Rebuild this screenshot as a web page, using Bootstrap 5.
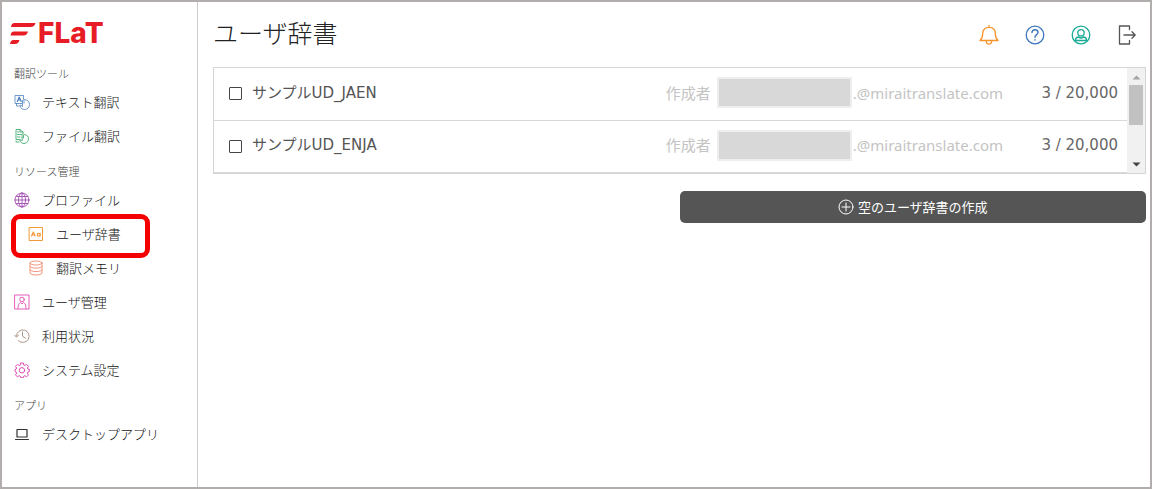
<!DOCTYPE html>
<html lang="ja">
<head>
<meta charset="utf-8">
<meta name="viewport" content="width=device-width, initial-scale=1">
<title>ユーザ辞書 - FLaT</title>
<link href="https://cdn.jsdelivr.net/npm/bootstrap@5.3.0/dist/css/bootstrap.min.css" rel="stylesheet">
<style>
  body { font-family: "Noto Sans", "Noto Sans CJK JP", sans-serif; color: #444; }
  .app-frame { border: 2px solid #b1adad; }
  .sidebar { width: 196px; flex: none; border-right: 1px solid #ccc; padding: 17px 12px 12px; font-family: "Noto Sans CJK JP", sans-serif; font-weight: 300; }
  .brand { color: #e81c26; height: 28px; gap: 2px; margin-left: -4px; margin-bottom: 14px; }
  .brand-name { font: 800 28px/28px Inter, sans-serif; }
  .nav-title { font-size: 11px; font-weight: 300; line-height: 24px; color: #444; margin: 0; }
  .nav-group + .nav-group { margin-top: 6px; }
  .side-link { height: 34px; font-size: 13px; color: #111; gap: 12px; }
  .side-link svg { width: 16px; height: 16px; flex: none; }
  .side-sub { padding-left: 14px; }
  .callout-ring { inset: -3px 35px -7px -3px; border: 5px solid #f50000; border-radius: 9px; pointer-events: none; }
  svg { fill: none; stroke-linecap: round; stroke-linejoin: round; }
  .main-pane { padding: 13px 4px 14px 15px; }
  .page-title { font: 300 25px/34px "Noto Sans CJK JP", sans-serif; color: #222; margin: 0; }
  .tool-row { gap: 24px; padding: 9px 8px 0 0; }
  .tool-row svg { width: 22px; height: 22px; display: block; }
  .dict-box { border: 1px solid #d5d5d5; margin-top: 18px; }
  .dict-table { font-size: 15px; line-height: 20px; }
  .dict-table td { height: 52px; padding: 0 0 2px; vertical-align: middle; border-bottom: 1px solid #d8d8d8; white-space: nowrap; }
  .dict-table label { gap: 10px; padding-left: 15px; font-family: "DejaVu Sans", "Noto Sans CJK JP", sans-serif; color: #555; }
  .dict-check { appearance: none; width: 13px; height: 13px; border: 1px solid #444; border-radius: 1px; margin: 2px 0 0; background: #fff; }
  .dict-check:checked { background: #444; }
  .owner { color: #c4c4c4; }
  .masked { width: 135px; height: 31px; background: #d8d8d8; border: 2px solid #eee; margin-left: 6px; margin-right: 1px; }
  .dict-table .amount { width: 124px; padding-right: 9px; color: #666; font-family: "DejaVu Sans", sans-serif; }
  .scroll-track { width: 18px; background: #f1f1f1; flex: none; }
  .scroll-track svg { width: 17px; height: 17px; display: block; }
  .scroll-thumb { width: 14px; height: 40px; background: #c1c1c1; }
  .create-btn { height: 32px; margin-top: 17px; background: #555; color: #fff; border-radius: 5px; font: 400 13px/18px "Noto Sans CJK JP", sans-serif; gap: 4px; }
  .create-btn:hover { background: #444; color: #fff; }
  .create-btn svg { width: 16px; height: 16px; }
</style>
</head>
<body>
<div class="app-frame d-flex min-vh-100">
  <nav class="sidebar" aria-label="メニュー">
    <a href="#" class="brand d-flex align-items-center text-decoration-none">
      <svg width="26" height="23" viewBox="0 0 26 23" style="fill:currentColor" aria-hidden="true">
        <path d="M4.500 1H25.500Q24.500 5 20.500 5H1Q1.500 1 4.500 1ZM4 9.500H18Q17 13.500 13.500 13.500H.5Q1 9.500 4 9.500ZM3.500 18H9.500Q8.500 22 5 22H0Q.5 18 3.500 18Z"/>
      </svg>
      <span class="brand-name">FLaT</span>
    </a>

    <section class="nav-group">
      <h2 class="nav-title">翻訳ツール</h2>
      <ul class="list-unstyled mb-0">
        <li><a href="#" class="side-link d-flex align-items-center text-decoration-none">
          <svg viewBox="0 0 16 16" stroke="#4d83bd" stroke-width=".8"><path d="M8 9.500H1V1.500h8.500V5M2.500 9.500v2.500h3M10.500 5.500c3 .2 5 2.200 5 5s-2 5-5 5-4-2-4.500-4c1-.5 2 .2 2.500 1V6.500c0-1 1.500-1 1.500 0V9"/><path d="M3.300 7.500 5.200 3l2 4.500M4 6h2.500" stroke-width="1.200"/></svg>
          テキスト翻訳</a></li>
        <li><a href="#" class="side-link d-flex align-items-center text-decoration-none">
          <svg viewBox="0 0 16 16" stroke="#43ad72" stroke-width=".9"><path d="M5.500 11.500H2v-10h4l3 2.500v2M6 1.500V4h3M3.500 4H5M3.500 6.500h4M3.500 9H6M2 13v1h3M10 6.500c3 .2 4.500 1.800 4.500 4.300s-1.800 4.700-4.500 4.700-3.700-1.800-4.200-3.500c1-.5 1.800 0 2.300.8V7.500c0-1 1.400-1 1.400 0V10"/></svg>
          ファイル翻訳</a></li>
      </ul>
    </section>

    <section class="nav-group">
      <h2 class="nav-title">リソース管理</h2>
      <ul class="list-unstyled mb-0">
        <li><a href="#" class="side-link d-flex align-items-center text-decoration-none">
          <svg viewBox="0 0 16 16" stroke="#a04cae" stroke-width=".9"><circle cx="8" cy="8" r="7"/><ellipse cx="8" cy="8" rx="3.500" ry="7"/><path d="M8 1v14M1 8h14M2 4.500h12M2 11.500h12"/></svg>
          プロファイル</a></li>
        <li class="position-relative"><a href="#" aria-current="page" class="side-link side-sub d-flex align-items-center text-decoration-none">
          <svg viewBox="0 0 16 16" stroke="#f39a3a"><path d="M1.500 1.500h13v13h-13z"/><path d="m3.500 10 1.800-4 1.800 4M4.200 9h2.200M12.200 7.300V10M12.200 8.700a1.500 1.300 0 1 0-3 0 1.500 1.300 0 1 0 3 0" stroke-width="1.200"/></svg>
          ユーザ辞書</a>
          <span class="callout-ring position-absolute"></span></li>
        <li><a href="#" class="side-link side-sub d-flex align-items-center text-decoration-none">
          <svg viewBox="0 0 16 16" stroke="#f08a70" stroke-width=".9"><ellipse cx="8" cy="3" rx="6" ry="2"/><path d="M2 3v10c0 2.600 12 2.600 12 0V3M2 6.300c0 2.600 12 2.600 12 0M2 9.700c0 2.600 12 2.600 12 0"/></svg>
          翻訳メモリ</a></li>
        <li><a href="#" class="side-link d-flex align-items-center text-decoration-none">
          <svg viewBox="0 0 16 16" stroke="#e04bb0" stroke-width=".9"><path d="M1 1h14v14H1zM4 14.500c0-4 1.500-5.500 2.500-6L8 10l1.500-1.500c1 .5 2.500 2 2.500 6"/><circle cx="8" cy="5.500" r="2.300"/></svg>
          ユーザ管理</a></li>
        <li><a href="#" class="side-link d-flex align-items-center text-decoration-none">
          <svg viewBox="0 0 16 16" stroke="#a08878" stroke-width=".9"><path d="M2.500 8a6.300 6.300 0 1 1 2 4.800M.5 7l2 2.200 2-2.200M8.500 4v4.200l3 2"/></svg>
          利用状況</a></li>
        <li><a href="#" class="side-link d-flex align-items-center text-decoration-none">
          <svg viewBox="0 0 16 16" stroke="#e04bb0" stroke-width="1"><path d="M6.700 1h2.600l.4 2 1.200.5 1.700-1.100 1.900 1.900-1.100 1.700.5 1.200 1.500.2v2.200l-1.500.4-.5 1.200 1.100 1.700-1.900 1.900-1.700-1.100-1.200.5-.4 1.500H6.700l-.4-1.500-1.200-.5-1.700 1.100-1.900-1.900 1.100-1.700-.5-1.200L1 9.600V7.400L2.100 7.200 2.600 6 1.500 4.300l1.900-1.900 1.700 1.100L6.300 3z"/><circle cx="8" cy="8.300" r="2.700"/></svg>
          システム設定</a></li>
      </ul>
    </section>

    <section class="nav-group">
      <h2 class="nav-title">アプリ</h2>
      <ul class="list-unstyled mb-0">
        <li><a href="#" class="side-link d-flex align-items-center text-decoration-none">
          <svg viewBox="0 0 16 16" stroke="#333" stroke-width="1.200"><path d="M3 3.500h10v7.500H3zM1.500 13.500h13"/></svg>
          デスクトップアプリ</a></li>
      </ul>
    </section>
  </nav>

  <main class="main-pane flex-grow-1">
    <header class="d-flex justify-content-between align-items-start">
      <h1 class="page-title">ユーザ辞書</h1>
      <div class="tool-row d-flex">
        <button type="button" class="btn border-0 p-0" aria-label="お知らせ">
          <svg viewBox="0 0 22 22" stroke="#f5942b" stroke-width="1.300"><path d="M2 16.500c2-1.700 2.700-3 2.700-7C4.700 5.600 7.200 3.300 11 3.300s6.300 2.300 6.300 6.200c0 4 .7 5.300 2.700 7zM11 3V1.500M8.200 16.500c0 4.800 5.600 4.800 5.600 0"/></svg></button>
        <button type="button" class="btn border-0 p-0" aria-label="ヘルプ">
          <svg viewBox="0 0 22 22" stroke="#3f78bd" stroke-width="1.300"><circle cx="11" cy="11" r="8.800"/><path d="M8 8.500C8 4.600 14.200 4.900 14 8.500c-.1 2.200-3 2-3 4.700M11 15.800v.3" stroke-width="1.500"/></svg></button>
        <button type="button" class="btn border-0 p-0" aria-label="アカウント">
          <svg viewBox="0 0 22 22" stroke="#1aaa96" stroke-width="1.300"><circle cx="11" cy="11" r="8.800"/><circle cx="11" cy="8.800" r="3.200"/><path d="M5.500 16.500c0-2.500 1.500-3.500 3.500-3.500 1 1.300 3 1.300 4 0 2 0 3.500 1 3.500 3.500z"/></svg></button>
        <button type="button" class="btn border-0 p-0" aria-label="ログアウト">
          <svg viewBox="0 0 22 22" stroke="#555" stroke-width="1.300"><path d="M13.500 5.500V2H3.500v18h10v-3.500M8 11h11M16 7.800l3.200 3.200-3.200 3.200"/></svg></button>
      </div>
    </header>

    <div class="dict-box d-flex">
      <table class="dict-table flex-grow-1">
        <tbody>
          <tr>
            <td><label class="d-flex align-items-center"><input type="checkbox" class="dict-check">サンプルUD_JAEN</label></td>
            <td><div class="owner d-flex align-items-center justify-content-end"><span>作成者</span><span class="masked"></span><span>.@miraitranslate.com</span></div></td>
            <td class="amount text-end">3 / 20,000</td>
          </tr>
          <tr>
            <td><label class="d-flex align-items-center"><input type="checkbox" class="dict-check">サンプルUD_ENJA</label></td>
            <td><div class="owner d-flex align-items-center justify-content-end"><span>作成者</span><span class="masked"></span><span>.@miraitranslate.com</span></div></td>
            <td class="amount text-end">3 / 20,000</td>
          </tr>
        </tbody>
      </table>
      <div class="scroll-track d-flex flex-column align-items-center" aria-hidden="true">
        <svg viewBox="0 0 17 17"><path d="M4.500 11.500h8l-4-4z" fill="#a3a3a3"/></svg>
        <span class="scroll-thumb"></span>
        <svg class="mt-auto" viewBox="0 0 17 17"><path d="M4.500 6.500h8l-4 4z" fill="#444"/></svg>
      </div>
    </div>

    <div class="row g-0">
      <div class="col-6 offset-6">
        <button type="button" class="create-btn btn border-0 w-100 p-0 d-flex align-items-center justify-content-center">
          <svg viewBox="0 0 16 16" stroke="#fff"><circle cx="8" cy="8" r="7"/><path d="M8 4v8M4 8h8"/></svg>
          空のユーザ辞書の作成</button>
      </div>
    </div>
  </main>
</div>
<script src="https://cdn.jsdelivr.net/npm/bootstrap@5.3.0/dist/js/bootstrap.bundle.min.js"></script>
</body>
</html>
